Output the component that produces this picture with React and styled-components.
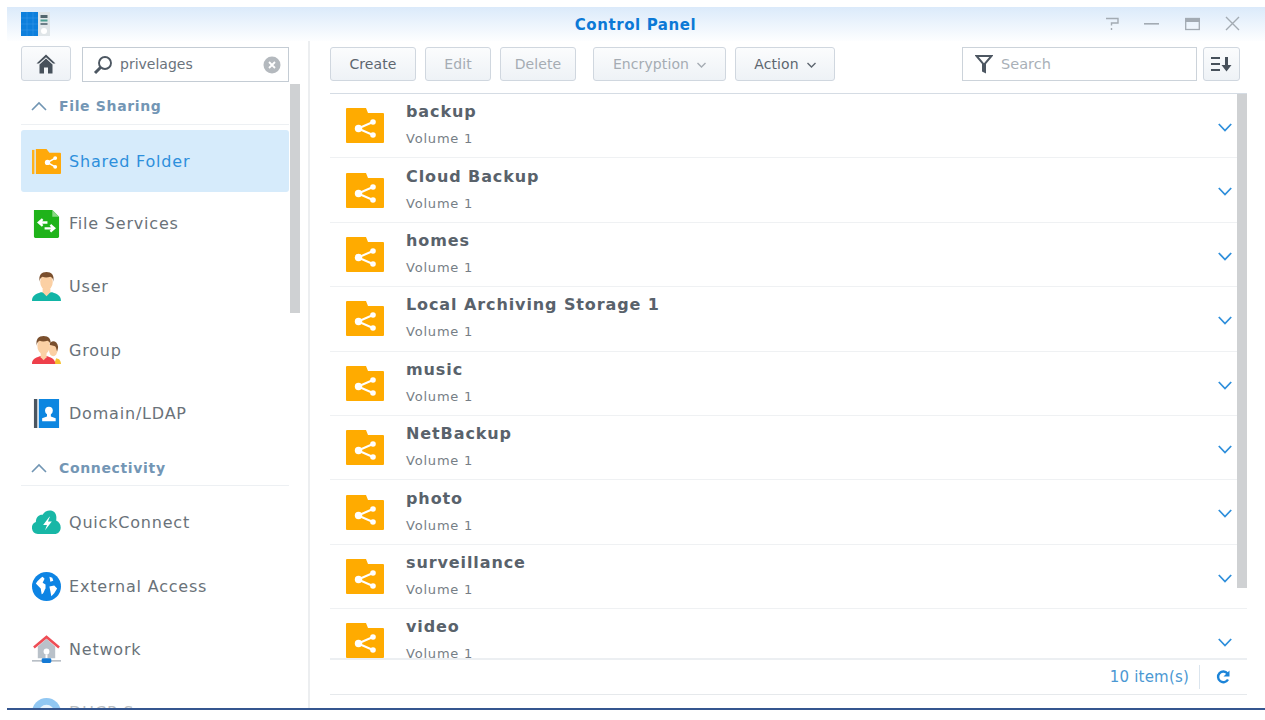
import React from "react";
import styled, { createGlobalStyle } from "styled-components";

const Global = createGlobalStyle`
  html, body { margin: 0; padding: 0; background: #fff; height: 720px; overflow: hidden; }
  body { font-family: "DejaVu Sans", Verdana, sans-serif; color: #505a64; }
  * { box-sizing: border-box; }
`;

const Page = styled.div`
  padding: 7px 0 0 7px;
  height: 720px;
  background: #fff;
`;
const Win = styled.div`
  height: 703px;
  display: flex;
  flex-direction: column;
  border-bottom: 2px solid #35568f;
  overflow: hidden;
  background: #fff;
`;
const TitleBar = styled.header`
  height: 34px;
  flex: none;
  position: relative;
  display: flex;
  align-items: center;
  justify-content: center;
  background: linear-gradient(#dbeafa, #fdfeff);
`;
const AppLogo = styled.svg`
  position: absolute;
  left: 14px;
  top: 4px;
`;
const Title = styled.div`
  font-size: 15px;
  font-weight: 700;
  color: #0c79d6;
  letter-spacing: 0.6px;
  transform: translate(-0.5px, 1px);
`;
const WinButtons = styled.div`
  position: absolute;
  right: 25px;
  top: 9px;
  display: flex;
  gap: 25.500px;
  align-items: center;
  color: #a3abb3;
`;
const Body = styled.div`
  flex: 1;
  min-height: 0;
  display: flex;
`;
const Sidebar = styled.aside`
  width: 295px;
  flex: none;
  position: relative;
  padding: 5px 0 0 14px;
  overflow: hidden;
`;
const SideTop = styled.div`
  display: flex;
  width: 268px;
  gap: 11px;
  align-items: flex-start;
`;
const BtnBase = styled.button`
  display: flex;
  align-items: center;
  justify-content: center;
  border: 1px solid #d0d7df;
  border-radius: 3px;
  background: linear-gradient(#fbfcfd, #eef2f6);
  padding: 0;
  font-family: inherit;
`;
const HomeBtn = styled(BtnBase)`
  width: 50px;
  height: 35px;
  flex: none;
`;
const SearchBox = styled.div`
  flex: 1;
  height: 35px;
  margin-top: 1px;
  border: 1px solid #c4ccd4;
  background: #fff;
  display: flex;
  align-items: center;
  padding: 0 7px 0 10px;
  gap: 7px;
  font-size: 14px;
  color: #6a737c;
`;
const SearchText = styled.span`
  flex: 1;
  padding-bottom: 1px;
`;
const Section = styled.div`
  width: 268px;
  height: ${p => p.$h}px;
  margin-top: ${p => p.$mt}px;
  border-bottom: 1px solid #edf0f3;
  display: flex;
  align-items: center;
  gap: 12px;
  padding: 7px 0 2px 10px;
  font-size: 14px;
  font-weight: 700;
  color: #7396b5;
  letter-spacing: 0.65px;
`;
const NavItem = styled.div`
  width: 268px;
  height: ${p => p.$h || 63.3}px;
  margin-top: ${p => p.$mt || 0}px;
  display: flex;
  align-items: center;
  gap: 8px;
  padding-left: 11px;
  border-radius: 3px;
  font-size: 16px;
  letter-spacing: 0.8px;
  opacity: ${p => (p.$faded ? 0.45 : 1)};
  color: ${p => (p.$active ? "#2d8fdc" : "#6a7279")};
  background: ${p => (p.$active ? "#d6ebfb" : "transparent")};
`;
const NavIcon = styled.svg`
  width: 29px;
  height: 29px;
  flex: none;
`;
const Scrollbar = styled.div`
  position: absolute;
  left: ${p => p.$x}px;
  top: ${p => p.$y}px;
  width: 10px;
  height: ${p => p.$h}px;
  background: #cfd1d3;
`;
const Divider = styled.div`
  width: 2px;
  flex: none;
  background: #eceef0;
  margin-left: 6px;
`;
const Main = styled.main`
  width: 917px;
  flex: none;
  margin-left: 20px;
  padding-bottom: 13px;
  display: flex;
  flex-direction: column;
  position: relative;
`;
const Toolbar = styled.div`
  height: 53px;
  flex: none;
  border-bottom: 1px solid #d5dce4;
  padding-top: 6px;
  display: flex;
  align-items: flex-start;
`;
const ToolBtn = styled(BtnBase)`
  width: ${p => p.$w}px;
  height: 34px;
  margin-right: ${p => p.$mr}px;
  font-size: 14px;
  letter-spacing: 0.1px;
  gap: 8px;
  color: ${p => (p.$off ? "#a5acb3" : "#5d666f")};
`;
const Caret = styled.svg`
  margin-top: 1px;
`;
const Spacer = styled.div`
  flex: 1;
`;
const FilterBox = styled.div`
  width: 235px;
  height: 34px;
  border: 1px solid #ccd3da;
  background: #fff;
  display: flex;
  align-items: center;
  padding-left: 12px;
  gap: 8px;
  font-size: 14.500px;
  color: #a9b0b7;
`;
const SortBtn = styled(BtnBase)`
  width: 37px;
  height: 34px;
  margin-left: 6px;
  margin-right: 7px;
`;
const List = styled.div`
  flex: 1;
  min-height: 0;
  overflow: hidden;
  border-bottom: 2px solid #eceff2;
`;
const Row = styled.div`
  height: 64.400px;
  border-bottom: 1px solid #eff1f3;
  display: flex;
  align-items: center;
  position: relative;
  padding-left: 16px;
`;
const RowIcon = styled.svg`
  flex: none;
`;
const RowText = styled.div`
  margin-left: 22px;
  flex: 1;
  display: flex;
  flex-direction: column;
  gap: 11px;
  position: relative;
  top: -1px;
`;
const RowTitle = styled.div`
  font-size: 16px;
  font-weight: 700;
  line-height: 18px;
  color: #59626b;
  letter-spacing: 0.9px;
`;
const RowSub = styled.div`
  font-size: 13px;
  line-height: 14px;
  letter-spacing: 0.8px;
  color: #767e86;
`;
const Chevron = styled.svg`
  position: absolute;
  left: 888px;
  top: 29px;
`;
const Footer = styled.div`
  height: 35px;
  flex: none;
  border-bottom: 1px solid #e6e9ec;
  display: flex;
  align-items: center;
  justify-content: flex-end;
  padding-right: 17px;
  font-size: 15px;
  color: #4b98d3;
  letter-spacing: 0.2px;
`;
const FootSep = styled.div`
  width: 1px;
  height: 24px;
  background: #dbe5ee;
  margin: 0 16px 0 10px;
`;

const FolderShare = () => (
  <RowIcon width="38" height="35" viewBox="0 0 38 35">
    <path d="M0 1a1 1 0 0 1 1-1h19l2 5h15a1 1 0 0 1 1 1v28a1 1 0 0 1-1 1H1a1 1 0 0 1-1-1z" fill="#ffab00" />
    <path d="M27 14 12 20.500 27 27" stroke="#fff" strokeWidth="2" fill="none" />
    <circle cx="12.500" cy="20.500" r="3.700" fill="#fff" />
    <circle cx="27" cy="14" r="2.800" fill="#fff" />
    <circle cx="27" cy="27" r="2.800" fill="#fff" />
  </RowIcon>
);

const UpChevron = () => (
  <svg width="16" height="10" viewBox="0 0 16 10" fill="none" stroke="#7195b3" strokeWidth="1.600">
    <path d="M1 9l7-7 7 7" />
  </svg>
);

const DownCaret = () => (
  <Caret width="9" height="6" viewBox="0 0 9 6" fill="none" stroke="currentColor" strokeWidth="1.400">
    <path d="M0.500 1 4.500 5 8.500 1" />
  </Caret>
);

const icons = {
  shared: (
    <NavIcon viewBox="0 0 30 30">
      <path d="M0 3h2.500v25H0z" fill="#ffb21c" />
      <path d="M4 2h11l3 4h11a1 1 0 0 1 1 1v20a1 1 0 0 1-1 1H4z" fill="#ffa90a" />
      <path d="M24 11.500 16 16 24 20.500" stroke="#fff" strokeWidth="1.600" fill="none" />
      <circle cx="16" cy="16" r="2.700" fill="#fff" />
      <circle cx="24" cy="11.500" r="2" fill="#fff" />
      <circle cx="24" cy="20.500" r="2" fill="#fff" />
    </NavIcon>
  ),
  file: (
    <NavIcon viewBox="0 0 30 30">
      <path d="M2 1h19l7 7v20.500A1.500 1.500 0 0 1 26.500 30h-23A1.500 1.500 0 0 1 2 28.500z" fill="#1fb31a" />
      <path d="M21 1l7 7h-7z" fill="#8ad886" />
      <path d="M7 14h9M11 10.500 7 14l4 3.500M13 20h10M19 16.500l4 3.500-4 3.500" stroke="#fff" strokeWidth="2.400" fill="none" />
    </NavIcon>
  ),
  user: (
    <NavIcon viewBox="0 0 30 30">
      <path d="M0 30c0-6 4-7 9-9h12c5 2 9 3 9 9z" fill="#12b5a6" />
      <path d="M11 17h8v4l-4 4-4-4z" fill="#fbd0a4" />
      <ellipse cx="15" cy="10" rx="6.500" ry="9" fill="#fbd0a4" />
      <path d="M8 10C6.500 3 10 0 15 0s8.500 3 7 10c0-3-1-4-3-5-3 1-6 1-8 0-2 1-3 2-3 5z" fill="#7a4f2d" />
    </NavIcon>
  ),
  group: (
    <NavIcon viewBox="0 0 30 30">
      <path d="M23 29l2-6 3 1c1 1 2 3 2 5z" fill="#f6c12e" />
      <ellipse cx="22" cy="14" rx="4.500" ry="7" fill="#fbd0a4" />
      <path d="M18 9c1-5 8-5 9 2 0 2-1 4-1 5-1-3-1-6-4-6z" fill="#7a4f2d" />
      <path d="M0 29c0-5 3-6 8-8h8c5 2 8 3 8 8z" fill="#ee3f4a" />
      <path d="M9 17h6v5l-3 3-3-3z" fill="#fbd0a4" />
      <ellipse cx="12" cy="10" rx="6.500" ry="9" fill="#fbd0a4" />
      <path d="M5 10C3.500 3 7 0 12 0s8.500 3 7 10c0-3-1-4-3-5-3 1-6 1-8 0-2 1-3 2-3 5z" fill="#7a4f2d" />
    </NavIcon>
  ),
  domain: (
    <NavIcon viewBox="0 0 30 30">
      <path d="M2 0h3.500v30H2z" fill="#4a5560" />
      <path d="M7 0h21v30H7z" fill="#0d86e0" />
      <circle cx="17.500" cy="12" r="4" fill="#fff" />
      <path d="M15.500 15h4v3l5 2v3H10.500v-3l5-2z" fill="#fff" />
    </NavIcon>
  ),
  quick: (
    <NavIcon viewBox="0 0 30 30">
      <path d="M6 27a6.500 6.500 0 0 1-2-12.500C4 9 8 6.500 11 7c3-6 13-6 14 1 .5 2 0 4 0 5 7 3 6 14-2 14z" fill="#18b7a6" />
      <path d="M18 9 11.500 17.500h4l-2 5.500 7-9h-4l2-5z" fill="#fff" />
    </NavIcon>
  ),
  external: (
    <NavIcon viewBox="0 0 30 30">
      <circle cx="15" cy="15" r="15" fill="#0d84e4" />
      <path d="M4 12c2-3 5-6 7-7l2 2-2 4 3 2 0 4c-1 1-2 6-4 6l-1-6z" fill="#fff" />
      <path d="M18 15l5-1 3 3-3 5-3 3-1-5zM18 5l3 1 1 3-3 1z" fill="#fff" />
    </NavIcon>
  ),
  network: (
    <NavIcon viewBox="0 0 30 30">
      <path d="M0 26h30v1.500H0z" fill="#aeb6be" />
      <path d="M6 12l9-8 9 8v12H6z" fill="#b9c1c9" />
      <path d="M2 13 15 2l13 11" stroke="#ee4d55" strokeWidth="2.600" fill="none" />
      <circle cx="15" cy="17" r="3" fill="#fff" />
      <rect x="14" y="20" width="2" height="4" fill="#fff" />
      <rect x="10" y="24" width="10" height="5" rx="1.500" fill="#1479d4" />
    </NavIcon>
  ),
  dhcp: (
    <NavIcon viewBox="0 0 30 30">
      <circle cx="15" cy="15" r="15" fill="#0d84e4" />
      <circle cx="15" cy="15" r="8" fill="#cfe6fa" />
    </NavIcon>
  ),
};

const rows = [
  "backup",
  "Cloud Backup",
  "homes",
  "Local Archiving Storage 1",
  "music",
  "NetBackup",
  "photo",
  "surveillance",
  "video",
];

export default function App() {
  return (
    <Page>
      <Global />
      <Win>
        <TitleBar>
          <AppLogo width="31" height="26" viewBox="0 0 31 26">
            <rect x="0" y="1" width="17" height="24" fill="#0d7fdc" />
            <path d="M0 7h17M0 13h17M0 19h17M6 1v24M12 1v24" stroke="#3c9bea" strokeWidth="0.500" />
            <rect x="17" y="1" width="12" height="24" fill="#dfe5e8" />
            <rect x="19.500" y="4" width="7" height="3" fill="#52666e" />
            <rect x="19.500" y="8.500" width="7" height="2" fill="#4a9e92" />
            <rect x="19.500" y="12" width="7" height="2" fill="#6d7f88" />
            <circle cx="23" cy="20" r="3" fill="#fff" />
          </AppLogo>
          <Title>Control Panel</Title>
          <WinButtons>
            <svg width="13" height="15" viewBox="0 0 13 15" fill="none" stroke="currentColor" strokeWidth="1.400">
              <path d="M0 2.500h12v4.500H5.500v2.500M5.500 12v2" />
            </svg>
            <svg width="15" height="15" viewBox="0 0 15 15" fill="currentColor">
              <rect x="0" y="7" width="15" height="1.600" />
            </svg>
            <svg width="15" height="15" viewBox="0 0 15 15" fill="none" stroke="currentColor">
              <rect x="0.700" y="2.500" width="13.600" height="11" strokeWidth="1.300" />
              <rect x="0.700" y="2.500" width="13.600" height="3" fill="currentColor" />
            </svg>
            <svg width="15" height="15" viewBox="0 0 15 15" fill="none" stroke="currentColor" strokeWidth="1.400">
              <path d="M1 1l13 13M14 1 1 14" />
            </svg>
          </WinButtons>
        </TitleBar>
        <Body>
          <Sidebar>
            <SideTop>
              <HomeBtn aria-label="Home">
                <svg width="20" height="20" viewBox="0 0 20 20">
                  <path d="M10 0.500 0.500 9.500h2.500L10 3.300 17 9.500h2.500z" fill="#47515b" />
                  <path d="M3.500 10.500 10 4.500l6.500 6v9h-4.500v-6H8v6H3.500z" fill="#47515b" />
                </svg>
              </HomeBtn>
              <SearchBox>
                <svg width="20" height="20" viewBox="0 0 20 20" fill="none" stroke="#4d5762">
                  <circle cx="12" cy="8" r="6" strokeWidth="1.900" />
                  <path d="M7.500 12.500 2 18" strokeWidth="3" />
                </svg>
                <SearchText>privelages</SearchText>
                <svg width="18" height="18" viewBox="0 0 18 18">
                  <circle cx="9" cy="9" r="8.500" fill="#b4b9be" />
                  <path d="M6 6l6 6M12 6l-6 6" stroke="#fff" strokeWidth="1.800" />
                </svg>
              </SearchBox>
            </SideTop>
            <Section $h={42} $mt={1}>
              <UpChevron />
              File Sharing
            </Section>
            <NavItem $active $mt={5} $h={62}>
              {icons.shared}
              <span>Shared Folder</span>
            </NavItem>
            <NavItem>{icons.file}<span>File Services</span></NavItem>
            <NavItem>{icons.user}<span>User</span></NavItem>
            <NavItem>{icons.group}<span>Group</span></NavItem>
            <NavItem>{icons.domain}<span>Domain/LDAP</span></NavItem>
            <Section $h={41} $mt={0}>
              <UpChevron />
              Connectivity
            </Section>
            <NavItem $mt={5}>{icons.quick}<span>QuickConnect</span></NavItem>
            <NavItem>{icons.external}<span>External Access</span></NavItem>
            <NavItem>{icons.network}<span>Network</span></NavItem>
            <NavItem $faded>{icons.dhcp}<span>DHCP Server</span></NavItem>
            <Scrollbar $x={283} $y={43} $h={229} />
          </Sidebar>
          <Divider />
          <Main>
            <Toolbar>
              <ToolBtn $w={86} $mr={9}>Create</ToolBtn>
              <ToolBtn $w={66} $mr={9} $off>Edit</ToolBtn>
              <ToolBtn $w={76} $mr={17} $off>Delete</ToolBtn>
              <ToolBtn $w={133} $mr={9} $off>Encryption<DownCaret /></ToolBtn>
              <ToolBtn $w={100} $mr={0}>Action<DownCaret /></ToolBtn>
              <Spacer />
              <FilterBox>
                <svg width="18" height="20" viewBox="0 0 18 20" fill="none" stroke="#4d5762" strokeWidth="2">
                  <path d="M1.500 2h15L10 9.500V18l-2-1V9.500z" />
                </svg>
                Search
              </FilterBox>
              <SortBtn aria-label="Sort">
                <svg width="21" height="16" viewBox="0 0 21 16" fill="#47515b">
                  <rect x="0" y="1" width="9" height="2" />
                  <rect x="0" y="7" width="9" height="2" />
                  <rect x="0" y="13" width="9" height="2" />
                  <path d="M14 1h3v8h3.500l-5 6.500-5-6.500H14z" />
                </svg>
              </SortBtn>
            </Toolbar>
            <List>
              {rows.map(name => (
                <Row key={name}>
                  <FolderShare />
                  <RowText>
                    <RowTitle>{name}</RowTitle>
                    <RowSub>Volume 1</RowSub>
                  </RowText>
                  <Chevron width="14" height="9" viewBox="0 0 14 9" fill="none" stroke="#2f8fdb" strokeWidth="1.800">
                    <path d="M0.800 1l6.200 6.500L13.200 1" />
                  </Chevron>
                </Row>
              ))}
            </List>
            <Footer>
              10 item(s)
              <FootSep />
              <svg width="14" height="14" viewBox="0 0 14 14" fill="none" stroke="#1c84d8" strokeWidth="2.400">
                <path d="M12 9.500A5.300 5.300 0 1 1 11.500 3.500" />
                <path d="M13.500 0.500v6h-6z" fill="#1c84d8" stroke="none" />
              </svg>
            </Footer>
            <Scrollbar $x={907} $y={53} $h={494} />
          </Main>
        </Body>
      </Win>
    </Page>
  );
}
